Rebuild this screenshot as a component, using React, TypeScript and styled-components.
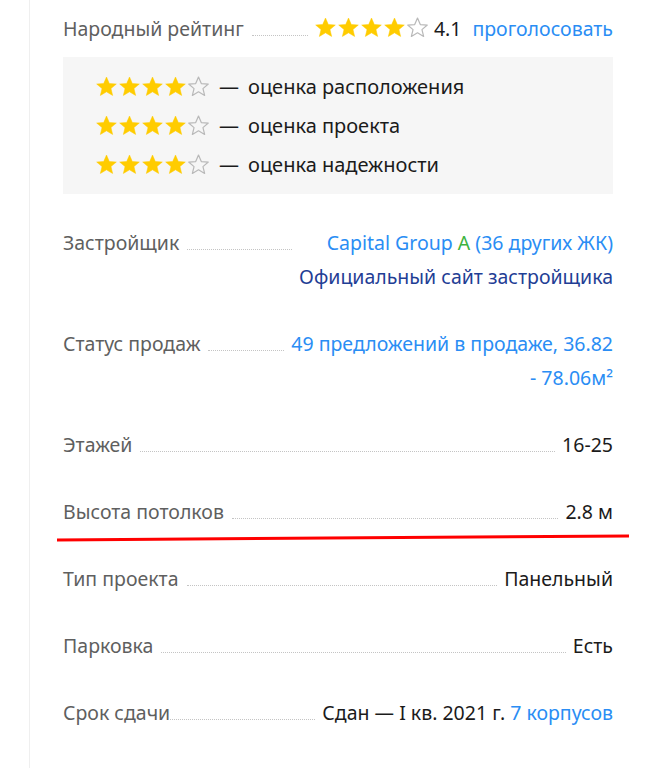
import React from "react";
import styled, { createGlobalStyle } from "styled-components";

const Global = createGlobalStyle`
  html, body { margin: 0; padding: 0; background: #fff; }
  body { font-family: "Noto Sans", "Open Sans", sans-serif; }
`;

const Panel = styled.div`
  margin-left: 29px;
  border-left: 1px solid #efefef;
  min-height: 768px;
  padding: 12px 41px 0 33px;
  box-sizing: border-box;
  width: 625px;
`;

const Row = styled.div<{ $gap?: number }>`
  position: relative;
  display: flex;
  align-items: baseline;
  font-size: 19.5px;
  line-height: 34px;
  margin-bottom: ${(p) => (p.$gap ?? 33)}px;
`;

const Label = styled.span`
  flex: none;
  color: #5f5f5f;
`;

const Leader = styled.span<{ $tight?: boolean }>`
  flex: 1 1 auto;
  min-width: 20px;
  margin: 0 ${(p) => (p.$tight ? "0" : "8px")};
  margin-right: 7px;
  border-bottom: 1px dotted #c4c4c4;
`;

const Value = styled.div`
  flex: none;
  text-align: right;
  color: #1b1b1b;
`;

const Link = styled.a<{ $dark?: boolean }>`
  color: ${(p) => (p.$dark ? "#1f3e95" : "#2a8df4")};
  text-decoration: none;
`;

const Green = styled.span`
  color: #3db33d;
`;

const Stars = styled.span`
  display: inline-flex;
  gap: 2px;
  vertical-align: -2px;
  margin-right: 6px;
`;

const Score = styled.span`
  color: #1b1b1b;
  margin-right: 11px;
`;

const RatingBox = styled.div`
  background: #f6f6f6;
  padding: 10px 0 10px 33px;
  margin-top: -22px;
  margin-bottom: 32px;
`;

const RatingLine = styled.div`
  display: flex;
  align-items: center;
  font-size: 20px;
  line-height: 39px;
  color: #1b1b1b;
`;

const Dash = styled.span`
  margin: 0 9px 0 4px;
`;

const RedLine = styled.svg`
  position: absolute;
  left: -6px;
  top: 39px;
  width: 572px;
  height: 8px;
  overflow: visible;
`;

const Star: React.FC<{ filled: boolean }> = ({ filled }) => (
  <svg width="21" height="21" viewBox="0 0 24 24">
    <path
      d="M12 1.2l3.2 7.4 8 .6-6.1 5.2 1.9 7.8L12 18.1 5 22.2l1.9-7.8L.8 9.2l8-.6z"
      fill={filled ? "#ffcc00" : "none"}
      stroke={filled ? "#ffcc00" : "#b9b9b9"}
      strokeWidth={filled ? 0.6 : 1.4}
      strokeLinejoin="round"
    />
  </svg>
);

const StarRow: React.FC<{ n: number }> = ({ n }) => (
  <Stars>
    {[0, 1, 2, 3, 4].map((i) => (
      <Star key={i} filled={i < n} />
    ))}
  </Stars>
);

export default function App() {
  const sub = ["оценка расположения", "оценка проекта", "оценка надежности"];
  return (
    <>
      <Global />
      <Panel>
        <Row>
          <Label>Народный рейтинг</Label>
          <Leader />
          <Value>
            <StarRow n={4} />
            <Score>4.1</Score>
            <Link href="#">проголосовать</Link>
          </Value>
        </Row>
        <RatingBox>
          {sub.map((s) => (
            <RatingLine key={s}>
              <StarRow n={4} />
              <Dash>—</Dash>
              {s}
            </RatingLine>
          ))}
        </RatingBox>
        <Row>
          <Label>Застройщик</Label>
          <Leader />
          <Value>
            <Link href="#">
              Capital Group <Green>A</Green> (36 других ЖК)
            </Link>
            <br />
            <Link href="#" $dark>
              Официальный сайт застройщика
            </Link>
          </Value>
        </Row>
        <Row>
          <Label>Статус продаж</Label>
          <Leader />
          <Value>
            <Link href="#">
              49 предложений в продаже, 36.82
              <br />- 78.06м²
            </Link>
          </Value>
        </Row>
        <Row>
          <Label>Этажей</Label>
          <Leader />
          <Value>16-25</Value>
        </Row>
        <Row>
          <Label>Высота потолков</Label>
          <Leader />
          <Value>2.8 м</Value>
          <RedLine viewBox="0 0 572 8">
            <line x1="0" y1="6" x2="572" y2="2" stroke="#ff0000" strokeWidth="3" />
          </RedLine>
        </Row>
        <Row>
          <Label>Тип проекта</Label>
          <Leader />
          <Value>Панельный</Value>
        </Row>
        <Row>
          <Label>Парковка</Label>
          <Leader />
          <Value>Есть</Value>
        </Row>
        <Row>
          <Label>Срок сдачи</Label>
          <Leader $tight />
          <Value>
            Сдан — I кв. 2021 г. <Link href="#">7 корпусов</Link>
          </Value>
        </Row>
      </Panel>
    </>
  );
}
